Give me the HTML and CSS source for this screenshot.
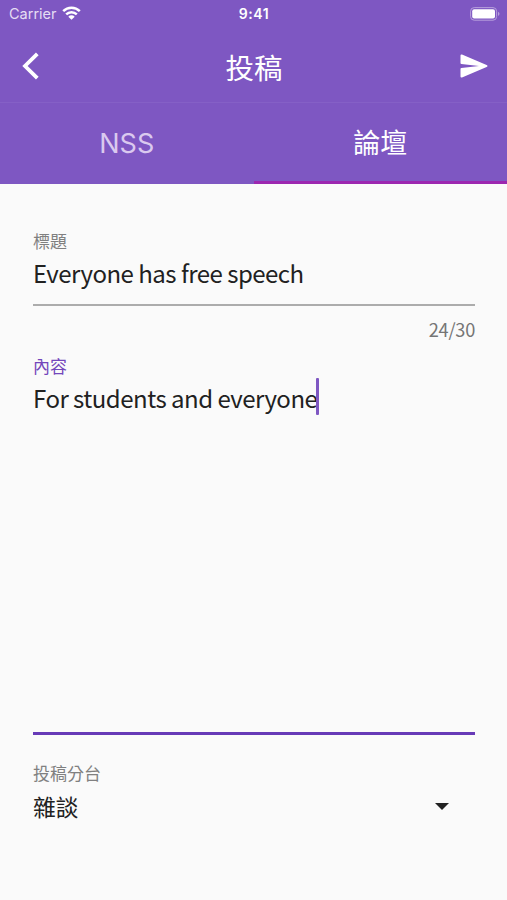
FILE: index.html
```html
<!DOCTYPE html>
<html lang="zh-Hant">
<head>
<meta charset="utf-8">
<title>投稿</title>
<link rel="stylesheet" href="styles.css">
</head>
<body>
<header class="top">
  <div class="status">
    <div class="carrier"><span>Carrier</span><svg class="wifi" viewBox="0 0 19 14"><path d="M1.2 5.2a11.7 11.7 0 0 1 16.6 0M4.2 8.4a7.5 7.5 0 0 1 10.6 0" fill="none" stroke="#fff" stroke-width="2.5"/><path d="M6.3 10.7a4.5 4.5 0 0 1 6.4 0L9.5 13.8z" fill="#fff"/></svg></div>
    <div class="time">9:41</div>
    <svg class="battery" viewBox="0 0 30 14"><rect x=".6" y=".6" width="26" height="12.6" rx="3.6" fill="none" stroke="#b79fdc"/><rect x="2.2" y="2.2" width="22.8" height="9.4" rx="2" fill="#fff"/><path d="M28 4.8c2 .8 2 3.4 0 4.2z" fill="#b79fdc"/></svg>
  </div>
  <div class="bar">
    <svg class="back" viewBox="0 0 18 28"><path d="M15.3 1.8 3 14l12.3 12.2" fill="none" stroke="#fff" stroke-width="3.8"/></svg>
    <h1>投稿</h1>
    <svg class="send" viewBox="0 0 28 24"><path d="M2 .6 26.6 11.1q1.9.9 0 1.8L2 23.4Q.5 23.8.5 22.4V15q0-.9.9-1L19 12 1.4 10Q.5 9.9.5 9V1.6Q.5.2 2 .6z" fill="#fff"/></svg>
  </div>
  <nav class="tabs"><div class="tab">NSS</div><div class="tab active">論壇</div></nav>
</header>
<main class="form">
  <section class="field title"><label>標題</label><div class="value latin">Everyone has free speech</div></section>
  <div class="count">24/30</div>
  <section class="field content"><label>內容</label><div class="value latin">For students and everyone<span class="caret"></span></div></section>
  <section class="field board"><label>投稿分台</label><div class="value select"><span>雜談</span><svg class="arrow" viewBox="0 0 14 7"><path d="M0 0h14L7 7z" fill="#212121"/></svg></div></section>
</main>
</body>
</html>
```
FILE: styles.css
```css
* { box-sizing: border-box; }
body { margin: 0; width: 507px; height: 900px; overflow: hidden; background: #fafafa; color: #212121; font-family: "Noto Sans CJK TC", sans-serif; }
svg { display: block; flex: none; }
.top { height: 184px; background: #7e57c2; color: #fff; }
.status { height: 28px; padding: 0 7px 0 9px; display: grid; grid-template-columns: 1fr auto 1fr; align-items: center; font: 14.5px/28px Inter, sans-serif; }
.carrier { display: flex; align-items: center; gap: 5px; color: #e5ddf3; }
.wifi { width: 19px; height: 14px; margin-top: -2px; }
.time { font-weight: 600; font-size: 14px; letter-spacing: .6px; margin-left: -1px; }
.battery { width: 30px; height: 14px; justify-self: end; margin-top: -1px; }
.bar { height: 75px; padding: 1px 19px 0 22px; display: flex; align-items: center; justify-content: space-between; border-bottom: 1px solid #8560c6; }
.back { width: 18px; height: 28px; }
h1 { margin: 3px 0 0 8px; font-size: 28.5px; line-height: 40px; font-weight: 400; }
.send { width: 28px; height: 24px; }
.tabs { height: 81px; display: grid; grid-template-columns: 1fr 1fr; grid-template-rows: 81px; }
.tab { padding-top: 3px; text-align: center; font: 27px/75px Inter, "Noto Sans CJK TC", sans-serif; color: #dac9ef; border-bottom: 3px solid transparent; }
.active { padding-top: 4px; line-height: 74px; color: #fff; border-color: #9c27b0; }
.form { padding: 44px 32px 0 33px; }
label { display: block; font-size: 17px; line-height: 26px; color: #808080; }
.value { font-size: 22.8px; line-height: 36px; margin-top: 1px; }
.latin { font-size: 24px; letter-spacing: -.51px; }
.title { height: 78px; border-bottom: 2px solid #acacac; }
.count { height: 47px; padding-top: 10px; text-align: right; font-size: 18.2px; letter-spacing: -.25px; line-height: 26px; color: #757575; }
.content { height: 382px; border-bottom: 3px solid #673ab7; }
.content label { color: #7346bb; }
.content .value { display: flex; }
.caret { width: 3px; height: 37px; margin: -2px 0 0 -1px; border-radius: 1px; background: #7e57c2; }
.board { padding-top: 25px; }
.board .value { margin-top: 3px; }
.select { display: flex; align-items: center; justify-content: space-between; padding-right: 26px; }
.arrow { width: 14px; height: 7px; margin-top: -2px; }
```
